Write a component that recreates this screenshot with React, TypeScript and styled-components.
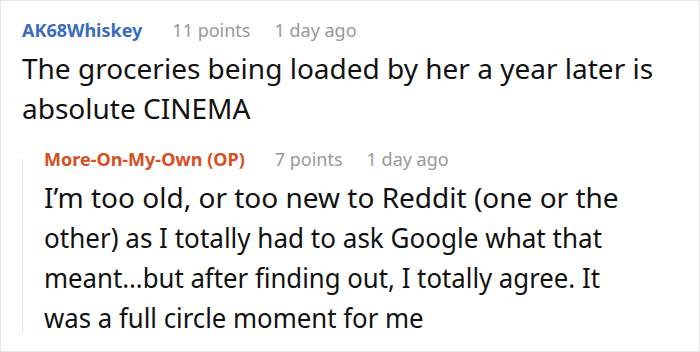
import React from "react";
import styled, { createGlobalStyle } from "styled-components";

const Global = createGlobalStyle`
  html, body { margin: 0; padding: 0; background: #fff; }
  body { font-family: "Noto Sans", "Open Sans", sans-serif; }
`;

const Frame = styled.div`
  box-sizing: border-box;
  width: 700px;
  height: 352px;
  border: 1px solid #e6e6e6;
  background: #fff;
  padding: 16px 0 0 21px;
  overflow: hidden;
`;

const Comment = styled.div`
  display: flex;
  flex-direction: column;
`;

const Meta = styled.div`
  display: flex;
  align-items: center;
  height: 26px;
  font-size: 18px;
  line-height: 26px;
  white-space: nowrap;
`;

const Author = styled.span<{ $op?: boolean }>`
  font-weight: 700;
  color: ${(p) => (p.$op ? "#d4501f" : "#3a6cbd")};
  margin-right: 30px;
`;

const Stat = styled.span`
  color: #999;
  margin-right: 24px;
`;

const Body = styled.div`
  font-size: 28px;
  line-height: 40px;
  color: #111;
  margin-top: 5px;
  white-space: nowrap;
  display: flex;
  flex-direction: column;
  align-items: flex-start;
`;

const Line = styled.span<{ $squeeze?: number }>`
  display: block;
  transform-origin: left center;
  transform: ${(p) => (p.$squeeze ? `scaleX(${p.$squeeze})` : "none")};
`;

const Reply = styled.div`
  position: relative;
  margin-top: 18px;
  padding-left: 22px;
  &::before {
    content: "";
    position: absolute;
    left: 0;
    top: 12px;
    bottom: 4px;
    width: 1px;
    background: #e3e3e3;
  }
`;

export default function App() {
  return (
    <>
      <Global />
      <Frame>
        <Comment>
          <Meta>
            <Author>AK68Whiskey</Author>
            <Stat>11 points</Stat>
            <Stat>1 day ago</Stat>
          </Meta>
          <Body>
            <Line>The groceries being loaded by her a year later is</Line>
            <Line>absolute CINEMA</Line>
          </Body>
        </Comment>
        <Reply>
          <Comment>
            <Meta>
              <Author $op>More-On-My-Own (OP)</Author>
              <Stat>7 points</Stat>
              <Stat>1 day ago</Stat>
            </Meta>
            <Body>
              <Line>I’m too old, or too new to Reddit (one or the</Line>
              <Line $squeeze={0.93}>other) as I totally had to ask Google what that</Line>
              <Line $squeeze={0.92}>meant…but after finding out, I totally agree. It</Line>
              <Line $squeeze={0.92}>was a full circle moment for me</Line>
            </Body>
          </Comment>
        </Reply>
      </Frame>
    </>
  );
}
